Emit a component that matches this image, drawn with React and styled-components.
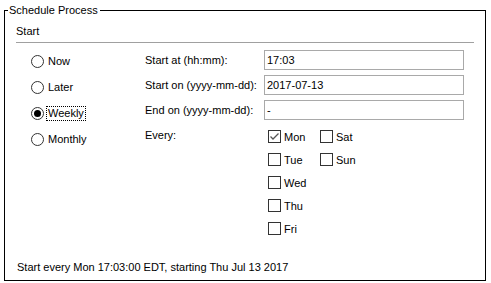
import React from "react";
import styled, { createGlobalStyle } from "styled-components";

const Global = createGlobalStyle`
  html, body { margin: 0; padding: 0; background: #fff; }
  body { font-family: "Liberation Sans", Arial, sans-serif; font-size: 11px; color: #000; }
`;

const Fieldset = styled.fieldset`
  margin: 0 0 0 4px;
  padding: 0;
  width: 480px;
  border: 1px solid #000;
  min-width: 0;
`;

const Legend = styled.legend`
  margin-left: 3px;
  padding: 0 2px 0 1px;
  line-height: 21px;
  font-size: 11px;
`;

const Content = styled.div`
  height: 259px;
  display: flex;
  flex-direction: column;
`;

const Section = styled.div`
  margin: 0 11px;
`;

const SectionTitle = styled.div`
  padding: 3px 0 4px;
  line-height: 14px;
  border-bottom: 1px solid #a0a0a0;
`;

const Body = styled.div`
  display: flex;
  padding-left: 15px;
`;

const RadioColumn = styled.div`
  width: 114px;
  padding-top: 5px;
  display: flex;
  flex-direction: column;
`;

const RadioRow = styled.label`
  height: 26px;
  display: flex;
  align-items: center;
  gap: 4px;
`;

const RadioCircle = styled.span`
  box-sizing: border-box;
  width: 13px;
  height: 13px;
  border: 1px solid #333;
  border-radius: 50%;
  display: flex;
  align-items: center;
  justify-content: center;
  background: #fff;
  &::after {
    content: "";
    width: 7px;
    height: 7px;
    border-radius: 50%;
    background: ${(p) => (p.$checked ? "#000" : "transparent")};
  }
`;

const RadioText = styled.span`
  line-height: 13px;
  padding: 0 1px;
  margin-left: -1px;
  outline: ${(p) => (p.$focused ? "1px dotted #000" : "none")};
`;

const FormGrid = styled.div`
  display: grid;
  grid-template-columns: 119px 200px;
  grid-auto-rows: 20px;
  row-gap: 5px;
  padding-top: 7px;
  align-items: center;
`;

const Label = styled.div`
  line-height: 20px;
  align-self: start;
`;

const TextBox = styled.div`
  box-sizing: border-box;
  height: 20px;
  border: 1px solid #a9a9a9;
  padding-left: 2px;
  line-height: 18px;
  background: #fff;
`;

const DayGrid = styled.div`
  align-self: start;
  display: grid;
  grid-template-columns: 52px 52px;
  grid-auto-flow: column;
  grid-template-rows: repeat(5, 23px);
  padding: 0 0 0 4px;
`;

const DayItem = styled.label`
  display: flex;
  align-items: center;
  gap: 3px;
`;

const CheckBox = styled.span`
  box-sizing: border-box;
  width: 13px;
  height: 13px;
  border: 1px solid #333;
  background: #fff;
  display: flex;
  align-items: center;
  justify-content: center;
`;

const Footer = styled.div`
  margin-top: auto;
  padding: 0 0 6px 12px;
  line-height: 13px;
`;

const Check = () => (
  <svg width="11" height="11" viewBox="0 0 11 11">
    <path d="M1.5 5.5 L4 8 L9.5 2.5" fill="none" stroke="#555" strokeWidth="1.3" />
  </svg>
);

const Radio = ({ label, checked, focused }) => (
  <RadioRow>
    <RadioCircle $checked={checked} />
    <RadioText $focused={focused}>{label}</RadioText>
  </RadioRow>
);

const Day = ({ label, checked }) => (
  <DayItem>
    <CheckBox>{checked && <Check />}</CheckBox>
    <span>{label}</span>
  </DayItem>
);

const days = [
  ["Mon", true],
  ["Tue", false],
  ["Wed", false],
  ["Thu", false],
  ["Fri", false],
  ["Sat", false],
  ["Sun", false],
];

export default function App() {
  return (
    <>
      <Global />
      <Fieldset>
        <Legend>Schedule Process</Legend>
        <Content>
          <Section>
            <SectionTitle>Start</SectionTitle>
            <Body>
              <RadioColumn>
                <Radio label="Now" />
                <Radio label="Later" />
                <Radio label="Weekly" checked focused />
                <Radio label="Monthly" />
              </RadioColumn>
              <FormGrid>
                <Label>Start at (hh:mm):</Label>
                <TextBox>17:03</TextBox>
                <Label>Start on (yyyy-mm-dd):</Label>
                <TextBox>2017-07-13</TextBox>
                <Label>End on (yyyy-mm-dd):</Label>
                <TextBox>-</TextBox>
                <Label>Every:</Label>
                <DayGrid>
                  {days.map(([d, c]) => (
                    <Day key={d} label={d} checked={c} />
                  ))}
                </DayGrid>
              </FormGrid>
            </Body>
          </Section>
          <Footer>Start every Mon 17:03:00 EDT, starting Thu Jul 13 2017</Footer>
        </Content>
      </Fieldset>
    </>
  );
}
